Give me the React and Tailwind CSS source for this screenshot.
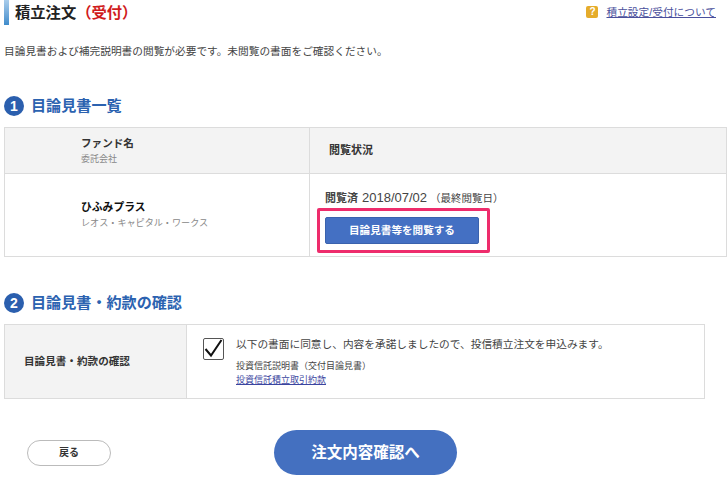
const JP = { fontFamily: '"Liberation Sans", "Noto Sans CJK JP", sans-serif' };

function Num({ n }) {
  return (
    <span className="flex h-[20px] w-[20px] shrink-0 items-center justify-center rounded-full bg-[#2b5fae] text-[14px] font-bold leading-none text-white">
      {n}
    </span>
  );
}

function Heading({ n, children }) {
  return (
    <div className="flex h-[20px] items-center gap-[7px]">
      <Num n={n} />
      <h2 className="text-[15.1px] font-bold leading-[20px] text-[#2b62b0]">{children}</h2>
    </div>
  );
}

export default function App() {
  return (
    <div className="h-[480px] w-[728px] overflow-hidden bg-white text-[#333]" style={JP}>
      <header className="flex h-[25px] items-start justify-between pl-[4px] pr-[12px]">
        <div className="flex h-[25px] items-center gap-[6px]">
          <span className="h-[25px] w-[5px] bg-gradient-to-b from-[#a9cdeb] to-[#3f8ccb]" />
          <h1 className="text-[15.3px] font-bold leading-[25px] text-[#222]">
            積立注文<span className="text-[#d01c1c]">（受付）</span>
          </h1>
        </div>
        <div className="mt-[5px] flex items-center gap-[8px]">
          <span className="flex h-[12px] w-[12px] items-center justify-center rounded-[2px] bg-[#e5ac2b] text-[10px] font-bold leading-none text-white">?</span>
          <a className="text-[10.7px] leading-[14px] text-[#4a4f9c] underline">積立設定/受付について</a>
        </div>
      </header>

      <p className="mt-[19px] pl-[4px] text-[10.7px] leading-[14px] text-[#444]">
        目論見書および補完説明書の閲覧が必要です。未閲覧の書面をご確認ください。
      </p>

      <section className="mt-[38px] pl-[4px]">
        <Heading n="1">目論見書一覧</Heading>
        <div className="mt-[11px] grid h-[130px] w-[723px] grid-cols-[305px_1fr] grid-rows-[46px_1fr] border border-[#dcdcdc]">
          <div className="flex flex-col justify-center border-b border-r border-[#dcdcdc] bg-[#f3f3f3] pl-[76px]">
            <div className="text-[10.6px] font-bold leading-[16px] text-[#333]">ファンド名</div>
            <div className="mt-[2px] text-[9px] leading-[13px] text-[#888]">委託会社</div>
          </div>
          <div className="flex items-center border-b border-[#dcdcdc] bg-[#f3f3f3] pl-[19px] text-[11px] font-bold text-[#333]">
            閲覧状況
          </div>
          <div className="flex flex-col justify-center border-r border-[#dcdcdc] pb-[2px] pl-[76px]">
            <div className="text-[10.8px] font-bold leading-[16px] text-[#111]">ひふみプラス</div>
            <div className="mt-[1px] text-[9.1px] leading-[14px] text-[#888]">レオス・キャピタル・ワークス</div>
          </div>
          <div className="pl-[15px] pt-[17px]">
            <div className="h-[17px] text-[10.5px] leading-[14px] text-[#444]">
              <span className="text-[11px] font-bold">閲覧済</span>
              <span className="ml-[4px] text-[13px]">2018/07/02</span> （最終閲覧日）
            </div>
            <div className="ml-[-8px] h-[45px] w-[173px] rounded-[2px] border-[3px] border-[#ee2c6c] pl-[5px] pt-[6px]">
              <button className="h-[27px] w-[154px] rounded-[2px] border border-[#3a62ad] bg-[#4470c3] text-[10.6px] font-bold text-white">
                目論見書等を閲覧する
              </button>
            </div>
          </div>
        </div>
      </section>

      <section className="mt-[36px] pl-[4px]">
        <Heading n="2">目論見書・約款の確認</Heading>
        <div className="mt-[11px] grid h-[75px] w-[701px] grid-cols-[182px_1fr] border border-[#dcdcdc]">
          <div className="flex items-center border-r border-[#dcdcdc] bg-[#f3f3f3] pl-[19px] text-[10.6px] font-bold text-[#333]">
            目論見書・約款の確認
          </div>
          <div className="flex pl-[16px] pt-[13px]">
            <span className="h-[22px] w-[21px] shrink-0 rounded-[2px] border border-[#555]">
              <svg viewBox="0 0 19 20" className="h-[20px] w-[19px]">
                <path d="M1.5 10 L7 16.5 L17.5 1" fill="none" stroke="#111" strokeWidth="2" />
              </svg>
            </span>
            <div className="ml-[12px] mt-[-2px]">
              <div className="text-[10.7px] leading-[16px] text-[#444]">
                以下の書面に同意し、内容を承諾しましたので、投信積立注文を申込みます。
              </div>
              <div className="mt-[8px] text-[9px] leading-[13px] text-[#444]">投資信託説明書（交付目論見書）</div>
              <a className="mt-[1px] block text-[9px] leading-[13px] text-[#3b45a0] underline">投資信託積立取引約款</a>
            </div>
          </div>
        </div>
      </section>

      <div className="mt-[31px] flex h-[45px] items-center pl-[27px]">
        <button className="h-[26px] w-[84px] rounded-full border border-[#bbb] bg-white text-[10px] font-bold text-[#333]">
          戻る
        </button>
        <button className="ml-[163px] h-[45px] w-[183px] rounded-full bg-[#4470c0] text-[15.5px] font-bold text-white">
          注文内容確認へ
        </button>
      </div>
    </div>
  );
}
